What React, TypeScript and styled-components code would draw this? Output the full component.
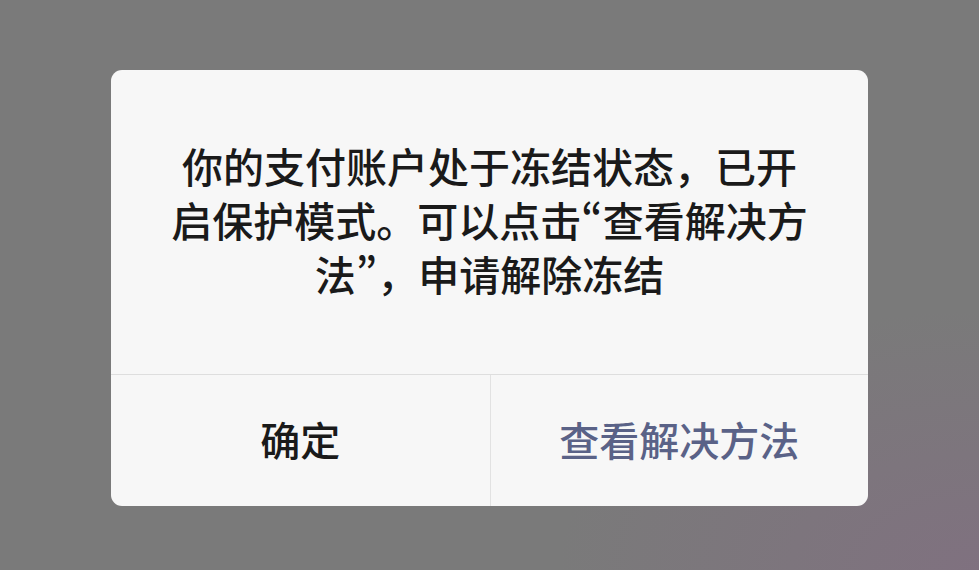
import React from 'react';
import styled, { createGlobalStyle } from 'styled-components';

const GlobalStyle = createGlobalStyle`
  html, body {
    margin: 0;
    padding: 0;
    height: 100%;
  }
  body {
    font-family: "Noto Sans CJK SC", "Noto Sans", sans-serif;
  }
  #root {
    height: 100%;
  }
`;

const Backdrop = styled.div`
  width: 100%;
  height: 100%;
  box-sizing: border-box;
  padding-top: 5px;
  display: flex;
  align-items: center;
  justify-content: center;
  background:
    radial-gradient(ellipse 420px 260px at 100% 100%, rgba(128, 112, 128, 0.9), rgba(122, 122, 122, 0) 100%),
    #7a7a7a;
`;

const Dialog = styled.div`
  width: 757px;
  background: #f7f7f7;
  border-radius: 11px;
  overflow: hidden;
  display: flex;
  flex-direction: column;
`;

const Message = styled.div`
  height: 305px;
  display: flex;
  align-items: center;
  justify-content: center;
  padding: 0 30px 6px;
  box-sizing: border-box;
  border-bottom: 1px solid #dedede;
`;

const MessageText = styled.p`
  margin: 0;
  font-size: 41px;
  font-weight: 500;
  line-height: 54px;
  color: #1a1a1a;
  text-align: center;
`;

const Quote = styled.span`
  font-feature-settings: "pwid";
`;

const Actions = styled.div`
  display: grid;
  grid-template-columns: 1fr 1fr;
  height: 131px;
`;

const ActionButton = styled.button<{ $primary?: boolean }>`
  border: none;
  background: transparent;
  margin: 0;
  padding: 0 0 2px;
  font-family: "Noto Sans CJK SC", "Noto Sans", sans-serif;
  font-size: 40px;
  font-weight: 500;
  color: ${(p) => (p.$primary ? '#5a6287' : '#1a1a1a')};
  border-left: ${(p) => (p.$primary ? '1px solid #e2e2e2' : 'none')};
  cursor: pointer;
`;

export default function App() {
  return (
    <>
      <GlobalStyle />
      <Backdrop>
        <Dialog>
          <Message>
            <MessageText>
              你的支付账户处于冻结状态，已开
              <br />
              启保护模式。可以点击<Quote>“</Quote>查看解决方
              <br />
              法<Quote>”</Quote>，申请解除冻结
            </MessageText>
          </Message>
          <Actions>
            <ActionButton>确定</ActionButton>
            <ActionButton $primary>查看解决方法</ActionButton>
          </Actions>
        </Dialog>
      </Backdrop>
    </>
  );
}
